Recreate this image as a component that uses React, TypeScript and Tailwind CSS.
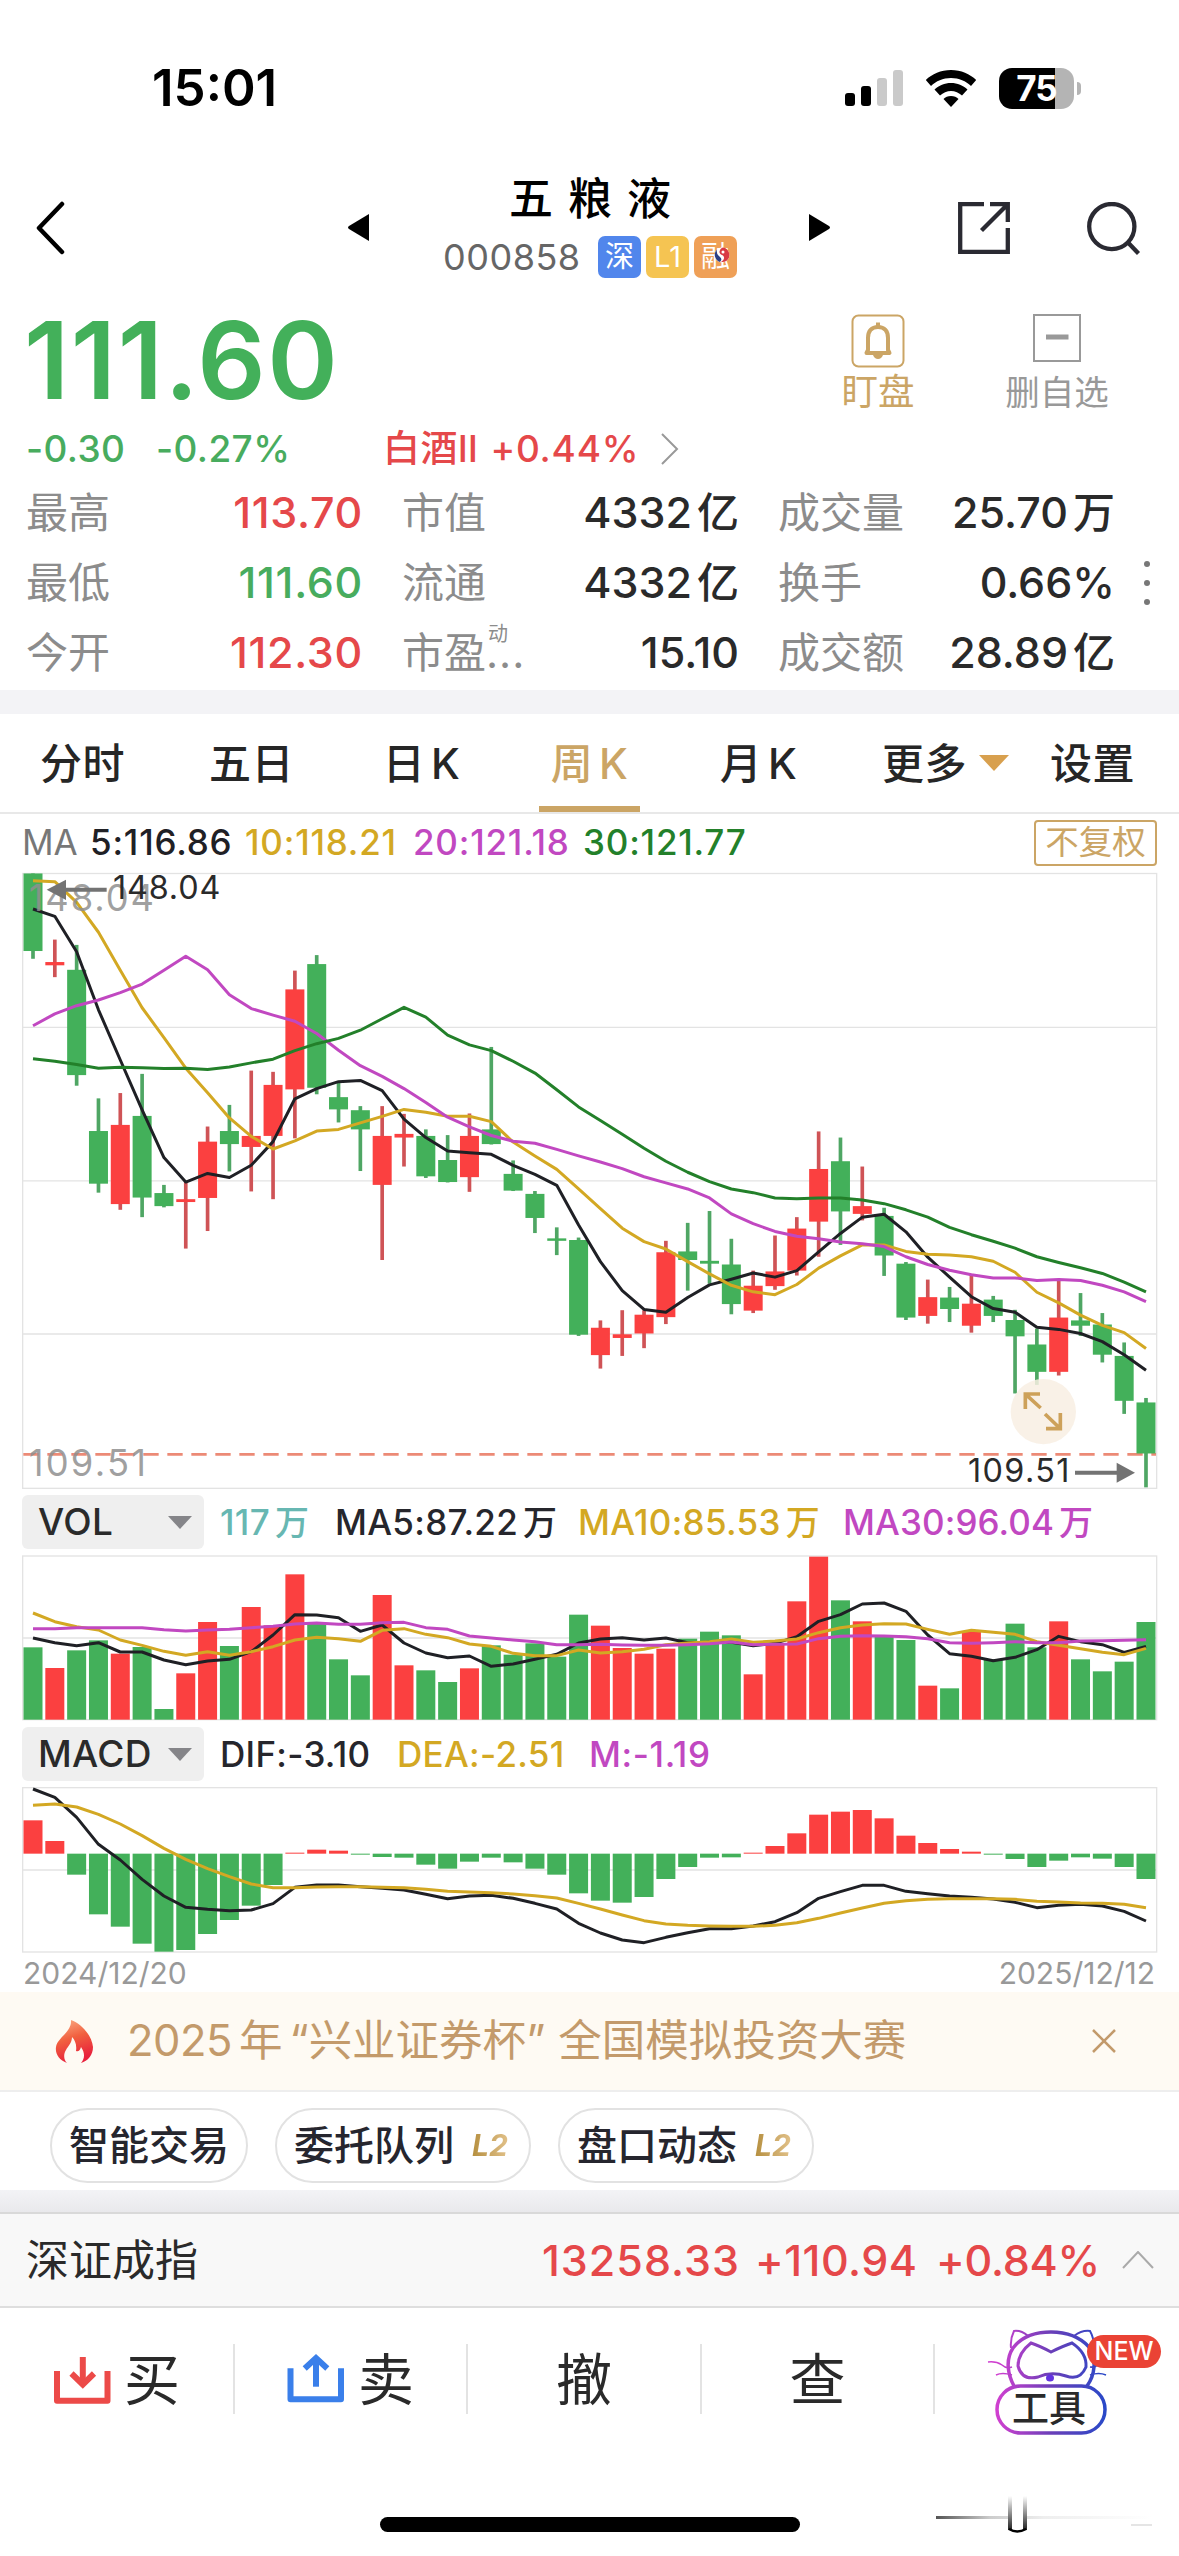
import React, { useId } from "react";
import clsx from "clsx";

type Candle = [hi: number, top: number, bottom: number, lo: number];

const CANDLES: Candle[] = [
  [33, 33, 223, 242], [195, 250, 258, 287], [208, 269, 527, 553], [584, 664, 793, 815],
  [571, 649, 843, 857], [524, 627, 827, 875], [796, 816, 848, 851], [787, 831, 838, 952],
  [653, 690, 828, 909], [600, 664, 696, 763], [516, 676, 703, 812], [519, 551, 676, 831],
  [271, 317, 562, 682], [233, 255, 558, 574], [545, 581, 611, 643], [603, 613, 660, 762],
  [603, 676, 796, 980], [622, 671, 680, 751], [660, 676, 775, 779], [674, 735, 789, 790],
  [621, 676, 777, 813], [458, 660, 696, 697], [736, 769, 810, 811], [811, 818, 877, 914],
  [900, 927, 933, 968], [925, 931, 1163, 1166], [1128, 1146, 1213, 1246], [1103, 1162, 1171, 1215],
  [1103, 1114, 1160, 1196], [933, 961, 1120, 1137], [889, 959, 980, 1055], [860, 982, 989, 1038],
  [928, 991, 1088, 1113], [1006, 1043, 1104, 1110], [920, 1008, 1044, 1053], [875, 903, 1006, 1018],
  [665, 757, 886, 972], [680, 738, 861, 943], [751, 848, 867, 883], [852, 872, 969, 1019],
  [985, 989, 1121, 1127], [1028, 1071, 1117, 1136], [1046, 1072, 1100, 1132], [1014, 1087, 1141, 1158],
  [1068, 1077, 1117, 1132], [1102, 1127, 1167, 1307], [1148, 1187, 1254, 1286], [1030, 1121, 1254, 1263],
  [1061, 1128, 1141, 1166], [1110, 1138, 1212, 1231], [1182, 1215, 1325, 1357], [1318, 1329, 1454, 1537],
];

// indexes of the weeks that closed up
const UP = new Set([1, 4, 7, 8, 10, 11, 12, 16, 17, 20, 26, 27, 28, 29, 33, 34, 35, 36, 38, 41, 43, 47]);

const MA5 = [120, 138, 225, 367, 490, 612, 729, 789, 768, 778, 748, 690, 585, 560, 543, 540, 565, 635, 680, 713, 717, 721, 748, 770, 797, 894, 984, 1055, 1101, 1108, 1072, 1041, 1027, 1012, 1022, 1006, 960, 915, 875, 868, 911, 973, 1022, 1070, 1099, 1108, 1145, 1150, 1160, 1180, 1212, 1250];
const MA10 = [51, 53, 104, 177, 270, 362, 435, 510, 570, 632, 677, 708, 688, 664, 660, 644, 628, 611, 618, 628, 628, 641, 691, 725, 758, 806, 854, 902, 935, 953, 984, 1014, 1042, 1058, 1065, 1040, 1000, 970, 943, 943, 959, 966, 968, 972, 983, 1010, 1059, 1085, 1115, 1140, 1158, 1197];
const MA20 = [406, 377, 357, 343, 325, 304, 270, 236, 269, 330, 364, 380, 395, 425, 466, 504, 530, 560, 594, 630, 654, 675, 689, 694, 709, 725, 740, 756, 776, 791, 806, 828, 867, 891, 910, 922, 928, 936, 940, 947, 972, 991, 1005, 1016, 1024, 1024, 1030, 1028, 1030, 1042, 1058, 1082];
const MA30 = [487, 493, 501, 510, 508, 509, 511, 510, 513, 507, 497, 488, 467, 450, 437, 417, 389, 361, 385, 429, 453, 467, 493, 522, 563, 605, 638, 672, 706, 738, 765, 788, 806, 815, 828, 830, 828, 828, 833, 842, 857, 875, 900, 918, 934, 951, 972, 986, 999, 1013, 1034, 1058];

const VOL = [472, 534, 481, 451, 491, 471, 657, 550, 396, 468, 351, 406, 253, 401, 508, 556, 315, 526, 541, 576, 535, 466, 494, 460, 500, 374, 407, 474, 491, 476, 446, 425, 436, 553, 465, 334, 200, 331, 394, 436, 450, 587, 595, 424, 508, 401, 472, 394, 508, 544, 515, 396];
const VOL_MA5 = [444, 458, 467, 458, 486, 486, 510, 524, 513, 508, 485, 435, 374, 375, 383, 424, 405, 459, 489, 503, 498, 529, 522, 508, 493, 459, 447, 443, 450, 444, 458, 457, 457, 467, 460, 440, 394, 374, 342, 339, 364, 435, 491, 499, 512, 502, 479, 439, 455, 464, 487, 469];
const VOL_MA10 = [369, 395, 410, 420, 450, 466, 484, 496, 485, 496, 485, 470, 450, 442, 446, 454, 421, 416, 433, 443, 462, 469, 490, 497, 497, 480, 489, 485, 478, 464, 459, 455, 447, 457, 453, 447, 428, 413, 405, 401, 402, 418, 433, 421, 427, 433, 455, 466, 476, 487, 494, 475];
const VOL_MA30 = [416, 416, 413, 413, 413, 413, 419, 423, 420, 418, 413, 409, 402, 399, 403, 403, 398, 397, 413, 418, 438, 444, 450, 455, 464, 464, 463, 465, 466, 466, 464, 461, 456, 464, 463, 462, 446, 439, 437, 438, 440, 446, 458, 460, 458, 455, 458, 458, 453, 452, 451, 449];

const MACD = [991, 1053, 1154, 1273, 1310, 1361, 1385, 1380, 1332, 1290, 1247, 1185, 1088, 1079, 1082, 1094, 1101, 1103, 1124, 1136, 1115, 1103, 1117, 1136, 1154, 1210, 1232, 1238, 1221, 1167, 1131, 1103, 1102, 1088, 1068, 1030, 974, 965, 960, 985, 1037, 1059, 1077, 1085, 1094, 1107, 1131, 1112, 1102, 1106, 1131, 1167];
const DIF = [897, 922, 982, 1063, 1110, 1168, 1218, 1252, 1258, 1262, 1260, 1241, 1192, 1185, 1185, 1190, 1195, 1200, 1213, 1226, 1218, 1216, 1225, 1240, 1257, 1300, 1329, 1350, 1358, 1342, 1328, 1316, 1316, 1308, 1295, 1268, 1225, 1205, 1186, 1186, 1204, 1211, 1218, 1222, 1227, 1237, 1253, 1246, 1243, 1248, 1264, 1293];
const DEA = [946, 942, 951, 973, 1002, 1037, 1075, 1108, 1136, 1160, 1182, 1193, 1193, 1191, 1190, 1190, 1192, 1193, 1198, 1204, 1206, 1208, 1212, 1217, 1224, 1240, 1257, 1275, 1292, 1302, 1306, 1308, 1309, 1309, 1306, 1298, 1285, 1269, 1254, 1240, 1232, 1228, 1226, 1226, 1226, 1228, 1234, 1236, 1239, 1240, 1243, 1253];

const RED = "#fb4040";
const GREEN = "#43b05a";
const GRID = "#e3e3e3";

// chart units are a third of a pixel
const xAt = (i: number) => 99 + i * 65.47;

// the price series is stored on a flatter scale than the chart is drawn
const priceY = (y: number) => y * 1.2245 - 27;

const Line = ({ data, color }: { data: number[]; color: string }) => (
  <polyline
    points={data.map((y, i) => `${xAt(i)},${y}`).join(" ")}
    fill="none"
    stroke={color}
    strokeWidth={9}
    strokeLinejoin="round"
  />
);

const Frame = ({ top, bottom, lines }: { top: number; bottom: number; lines: number[] }) => (
  <g stroke={GRID} strokeWidth={4} fill="none">
    <rect x={68} y={top} width={3402} height={bottom - top} />
    {lines.map((y) => (
      <path key={y} d={`M68 ${y}H3470`} />
    ))}
  </g>
);

const PriceChart = () => (
  <svg className="block h-[622px] w-full" viewBox="0 0 3537 1866">
    <Frame top={13.5} bottom={1858} lines={[475, 935.5, 1395]} />
    <path d="M70 1756H3468" stroke="#ec8a76" strokeWidth={8} strokeDasharray="46 26" />
    {CANDLES.map(([hi, top, bottom, lo], i) => (
      <g key={i}>
        <rect
          x={xAt(i) - 5.5}
          y={priceY(hi)}
          width={11}
          height={priceY(lo) - priceY(hi)}
          fill={UP.has(i) ? "#cf5356" : "#4fa664"}
        />
        <rect
          x={xAt(i) - 28.5}
          y={priceY(top)}
          width={57}
          height={priceY(bottom) - priceY(top)}
          fill={UP.has(i) ? RED : GREEN}
        />
      </g>
    ))}
    <Line data={MA5.map(priceY)} color="#1f2025" />
    <Line data={MA10.map(priceY)} color="#d3a823" />
    <Line data={MA20.map(priceY)} color="#c148c1" />
    <Line data={MA30.map(priceY)} color="#23802a" />
    <g className="font-[Inter,sans-serif]" fontSize={109}>
      <text x={86} y={125} fill="#8f8f8f" fillOpacity={0.85} textLength={376}>148.04</text>
      <text x={86} y={1820} fill="#8f8f8f" fillOpacity={0.85} textLength={352}>109.51</text>
      <text x={339} y={91} fill="#2a2a2a" fontSize={97} textLength={322}>148.04</text>
      <text x={2904} y={1840} fill="#2a2a2a" fontSize={97} textLength={304}>109.51</text>
    </g>
    <g fill="#737373">
      <path d="M140 62L198 32V56H320V68H198V93Z" />
      <path d="M3405 1811L3350 1781V1805H3225V1817H3350V1841Z" />
    </g>
    <circle cx={3130} cy={1628} r={98} fill="#f8efe3" fillOpacity={0.85} />
    <g fill="none" stroke="#cda15a" strokeWidth={11}>
      <path d="M3120 1575H3076V1620M3078 1577L3122 1617" />
      <path d="M3138 1679H3181V1632M3179 1677L3135 1635" />
    </g>
  </svg>
);

const VolumeChart = () => (
  <svg className="block h-[168px] w-full" viewBox="0 192 3537 504">
    <Frame top={198} bottom={689} lines={[444]} />
    {VOL.map((y, i) => (
      <rect key={i} x={xAt(i) - 28.5} y={y} width={57} height={689 - y} fill={UP.has(i) ? RED : GREEN} />
    ))}
    <Line data={VOL_MA5} color="#1f2025" />
    <Line data={VOL_MA10} color="#d3a823" />
    <Line data={VOL_MA30} color="#c148c1" />
  </svg>
);

const MacdChart = () => (
  <svg className="block h-[168px] w-full" viewBox="0 888 3537 504">
    <Frame top={893} bottom={1386} lines={[1140]} />
    {MACD.map((y, i) => (
      <rect
        key={i}
        x={xAt(i) - 28.5}
        y={Math.min(y, 1091)}
        width={57}
        height={Math.abs(y - 1091)}
        fill={y < 1091 ? RED : GREEN}
      />
    ))}
    <Line data={DIF} color="#1f2025" />
    <Line data={DEA} color="#d3a823" />
  </svg>
);

const StatusBar = () => (
  <div className="flex h-[165px] items-start justify-between pt-[65px] pr-[98px] pl-[152px]">
    <span className="text-[51px] leading-[46px] font-semibold text-black">15:01</span>
    <div className="flex h-[46px] items-center">
      <svg className="h-[38px] w-[58px]" viewBox="0 0 58 38">
        <rect x="0" y="24" width="10" height="13" rx="3" />
        <rect x="16" y="17" width="10" height="20" rx="3" />
        <rect x="32" y="9" width="10" height="28" rx="3" fill="#cacaca" />
        <rect x="48" y="1" width="10" height="36" rx="3" fill="#cacaca" />
      </svg>
      <svg className="ml-[22px] h-[38px] w-[52px]" viewBox="0 0 52 38">
        <path d="M26 1C16 1 7 5 .8 11L6 17C11 12 18 9 26 9S41 12 46 17L51.200 11C45 5 36 1 26 1Z" />
        <path d="M26 14C19.500 14 14 16.500 9.500 20.500L15 26.500C18 23.800 22 22 26 22S34 23.800 37 26.500L42.500 20.500C38 16.500 32.500 14 26 14Z" />
        <path d="M26 27C22.800 27 20.300 28.200 18.500 30L26 38L33.500 30C31.700 28.200 29.200 27 26 27Z" />
      </svg>
      <div className="ml-[22px] flex h-[41px] w-[75px] items-center justify-center rounded-[13px] bg-[linear-gradient(90deg,#000_75%,#b4b4b4_75%)] text-[35px] font-bold tracking-[-1px] text-white">
        75
      </div>
      <div className="ml-[3px] h-[13px] w-1 rounded-r-full bg-[#b4b4b4]" />
    </div>
  </div>
);

const Badge = ({ text, className }: { text: string; className: string }) => (
  <span className={clsx("flex h-[42px] w-[43px] items-center justify-center rounded-[7px] text-[29px] text-white", className)}>
    {text}
  </span>
);

const Header = () => (
  <header className="flex h-[135px] items-start pl-[36px]">
    <svg className="mt-[36px] h-[54px] w-[30px]" viewBox="0 0 30 54" fill="none" stroke="#000" strokeWidth="4.500" strokeLinecap="round" strokeLinejoin="round">
      <path d="M26 3L3 27L26 51" />
    </svg>
    <svg className="mt-[49px] ml-[282px] h-[27px] w-[21px]" viewBox="0 0 21 27">
      <path d="M21 0V27L1 15Q-1 13.500 1 12Z" />
    </svg>
    <div className="ml-[74px] w-[294px]">
      <div className="mt-[9px] pl-[66px] text-[44px] leading-[50px] font-medium tracking-[15px] whitespace-nowrap text-black">
        五粮液
      </div>
      <div className="mt-[12px] flex items-center">
        <span className="w-[156px] text-[36px] leading-[42px] tracking-[0.500px] text-[#666]">000858</span>
        <div className="relative flex gap-[5px]">
          <Badge text="深" className="bg-[#5186ec]" />
          <Badge text="L1" className="bg-[#f5c452]" />
          <Badge text="融" className="bg-[#efa057]" />
          <svg className="absolute top-[11px] right-[7px] h-4 w-4" viewBox="0 0 16 16">
            <circle cx="8" cy="8" r="7.500" fill="#fff" />
            <path d="M9 .6A7.500 7.500 0 0 1 13 13.500Q10 15.500 7 15Q12 12 9 8.500Q5 7 5.500 4.500Q6.500 1 9 .6Z" fill="#d93a44" />
            <path d="M3 2.500Q2 7 5.500 9.500Q9 12 6 15A7.500 7.500 0 0 1 3 2.500Z" fill="#2c3f86" />
            <circle cx="9" cy="5" r="1.500" fill="#fff" />
          </svg>
        </div>
      </div>
    </div>
    <svg className="mt-[49px] ml-[72px] h-[27px] w-[21px]" viewBox="0 0 21 27">
      <path d="M0 0V27L20 15Q22 13.500 20 12Z" />
    </svg>
    <svg className="mt-[37px] ml-[128px] h-[52px] w-[52px]" viewBox="0 0 52 52" fill="none" stroke="#2a2a32" strokeWidth="4.300">
      <path d="M26 2.200H2.200V49.800H49.800V26" />
      <path d="M32 2.200H49.800V20M49 3L23.500 28.500" />
    </svg>
    <svg className="mt-[37px] ml-[77px] h-[54px] w-[54px]" viewBox="0 0 54 54" fill="none" stroke="#2a2a32" strokeWidth="4.300">
      <circle cx="24.800" cy="24.600" r="22.600" />
      <path d="M40.500 40L51.500 51.500" />
    </svg>
  </header>
);

const PriceSummary = () => (
  <section className="flex h-[126px] items-start pl-[24px]">
    <div className="w-[817px] text-[107px] leading-[120px] font-semibold tracking-[1.600px] text-[#43b05a]">
      111.60
    </div>
    <div className="flex w-[74px] flex-col items-center pt-[14px] text-[#cba565]">
      <svg className="h-[54px] w-[54px]" viewBox="0 0 54 54" fill="none" stroke="currentColor">
        <rect x="1.500" y="1.500" width="51" height="51" rx="6" strokeWidth="2" />
        <g strokeWidth="4">
          <path d="M17 36V24C17 17 20.500 13 27 13S37 17 37 24V36L38.500 39H15.500Z" strokeLinejoin="round" />
          <path d="M27 8.500V13" />
        </g>
        <path d="M22 41H32Q30.500 45 27 45T22 41Z" fill="currentColor" stroke="none" />
      </svg>
      <span className="text-[36.500px] leading-[48px] whitespace-nowrap">盯盘</span>
    </div>
    <div className="ml-[92px] flex w-[100px] flex-col items-center pt-[14px] text-[#999]">
      <svg className="h-[48px] w-[48px]" viewBox="0 0 48 48" fill="none" stroke="currentColor">
        <rect x="1" y="1" width="46" height="46" strokeWidth="2" />
        <path d="M13 23H35.500" strokeWidth="5" />
      </svg>
      <span className="mt-[7px] text-[34.500px] leading-[48px] whitespace-nowrap">删自选</span>
    </div>
  </section>
);

const ChangeRow = () => (
  <div className="flex h-[46px] items-center pl-[26px] text-[37px] font-[450] tracking-[0.400px] text-[#48ac5e]">
    <span className="w-[130px]">-0.30</span>
    <span className="w-[227px]">-0.27%</span>
    <span className="flex w-[278px] items-center gap-[12px] whitespace-nowrap text-[#e5484a]">
      <span>白酒Ⅱ</span>
      <span className="tracking-[0.800px]">+0.44%</span>
    </span>
    <svg className="h-[32px] w-[18px]" viewBox="0 0 18 32" fill="none" stroke="#999" strokeWidth="2">
      <path d="M1 1L16 16L1 31" />
    </svg>
  </div>
);

type Quote = { label: string; sup?: string; value: string; unit?: string; color?: string };

const QUOTES: Quote[][] = [
  [
    { label: "最高", value: "113.70", color: "text-[#e5484a] tracking-[0.700px]" },
    { label: "市值", value: "4332", unit: "亿" },
    { label: "成交量", value: "25.70", unit: "万" },
  ],
  [
    { label: "最低", value: "111.60", color: "text-[#48ac5e] tracking-[0.700px]" },
    { label: "流通", value: "4332", unit: "亿" },
    { label: "换手", value: "0.66%" },
  ],
  [
    { label: "今开", value: "112.30", color: "text-[#e5484a] tracking-[0.700px]" },
    { label: "市盈", sup: "动", value: "15.10" },
    { label: "成交额", value: "28.89", unit: "亿" },
  ],
];

const QuoteTable = () => (
  <section className="flex h-[218px] pl-[26px]">
    <div className="grid h-[210px] w-[1089px] grid-cols-[337px_337px_337px] grid-rows-[70px_70px_70px] gap-x-[39px]">
      {QUOTES.flat().map((q) => (
        <div key={q.label} className="flex items-center justify-between whitespace-nowrap">
          <span className="flex text-[42px] text-[#8c8c8c]">
            {q.label}
            {q.sup && (
              <span className="relative tracking-[1px]">
                ...
                <span className="absolute -top-[2px] left-[2px] text-[20px]">{q.sup}</span>
              </span>
            )}
          </span>
          <span className={clsx("text-[43px] font-medium", q.color ?? "text-[#2a2a2a]")}>
            {q.value}
            {q.unit && <span className="ml-[5px] text-[42px]">{q.unit}</span>}
          </span>
        </div>
      ))}
    </div>
    <div className="mt-[84px] ml-[29px] flex flex-col gap-[13px]">
      <i className="h-[6px] w-[6px] rounded-full bg-[#777]" />
      <i className="h-[6px] w-[6px] rounded-full bg-[#777]" />
      <i className="h-[6px] w-[6px] rounded-full bg-[#777]" />
    </div>
  </section>
);

const Tab = ({ label, width, active }: { label: string; width: string; active?: boolean }) => (
  <div
    className={clsx(
      "flex h-full items-center justify-center border-y-[6px] border-t-transparent",
      width,
      active ? "border-b-[#cba565] text-[#cba565]" : "border-b-transparent"
    )}
  >
    {label}
  </div>
);

const Tabs = () => (
  <nav className="flex h-[100px] border-b-2 border-[#e8e8e8] pl-[32px] text-[42px] font-medium tracking-[0.500px] [word-spacing:-6px] whitespace-nowrap text-[#262626]">
    <Tab label="分时" width="w-[101px]" />
    <Tab label="五日" width="ml-[68px] w-[101px]" />
    <Tab label="日 K" width="ml-[69px] w-[101px]" />
    <Tab label="周 K" width="ml-[67px] w-[101px]" active />
    <Tab label="月 K" width="ml-[68px] w-[101px]" />
    <Tab label="更多" width="ml-[65px] w-[101px]" />
    <svg className="mt-[41px] ml-[4px] h-[16px] w-[30px]" viewBox="0 0 30 16">
      <path d="M0 0H30L15 16Z" fill="#d8a04e" />
    </svg>
    <Tab label="设置" width="ml-[33px] w-[101px]" />
  </nav>
);

const Indicators = ({ name, children }: { name: string; children: React.ReactNode }) => (
  <div className="flex h-[62px] items-center pl-[22px] text-[35px] font-[450] tracking-[0.300px] whitespace-nowrap text-[#26262c]">
    <div className="flex h-[54px] w-[182px] items-center justify-between rounded-[6px] bg-[#efefef] pr-[12px] pl-[16px] text-[37px] text-[#2a2a2a]">
      {name}
      <svg className="h-[13px] w-[24px]" viewBox="0 0 24 13">
        <path d="M0 0H24L12 13Z" fill="#858589" />
      </svg>
    </div>
    {children}
  </div>
);

const Unit = () => <span className="ml-[5px] text-[34px]">万</span>;

const Flame = () => {
  const id = useId();
  return (
    <svg className="h-[43px] w-[38px]" viewBox="0 0 38 43">
      <linearGradient id={id} x1="0" y1="0" x2=".3" y2="1">
        <stop offset=".1" stopColor="#f9a27c" />
        <stop offset=".5" stopColor="#f1603f" />
        <stop offset="1" stopColor="#e8213c" />
      </linearGradient>
      <path
        d="M16 0C27 4 37 16 38 27C38 35 33 41 26 43C30 38 30 33 26 27C25 31 23 32 21 31C22 25 20 20 17 17C17 23 13 26 11 30C8 35 9 40 12 43C4 40 0 34 1 27C2 18 17 12 16 0Z"
        fill={`url(#${id})`}
      />
    </svg>
  );
};

const Banner = () => (
  <div className="flex h-[100px] items-center border-b-2 border-[#eeeeee] bg-[#fefaf3] pl-[55px] text-[43.500px] whitespace-nowrap text-[#c39a6b]">
    <Flame />
    <div className="ml-[34px] flex w-[965px] items-center">
      <span className="tracking-[-0.500px]">2025</span>
      <span className="ml-[7px]">年</span>
      <span className="ml-[7px]">“</span>
      <span>兴业证券杯</span>
      <span>”</span>
      <span className="ml-[13px]">全国模拟投资大赛</span>
    </div>
    <svg className="h-[24px] w-[24px]" viewBox="0 0 24 24" stroke="#c39a6b" strokeWidth="2.500">
      <path d="M1 1L23 23M23 1L1 23" />
    </svg>
  </div>
);

const Pill = ({ label, level2 }: { label: string; level2?: boolean }) => (
  <button className="flex h-[75px] items-center rounded-full border-2 border-[#e2e2e2] px-[17px] text-[40px] font-medium whitespace-nowrap text-[#26262e]">
    {label}
    {level2 && (
      <span className="ml-[14px] w-[44px] bg-linear-to-r from-[#b18a35] to-[#e6c690] bg-clip-text text-[30px] font-bold text-transparent italic">
        L2
      </span>
    )}
  </button>
);

const IndexBar = () => (
  <div className="flex h-[96px] items-center border-y-2 border-t-[#d9d9d9] border-b-[#dedede] bg-[#f8f8f8] pl-[26px] text-[43px] font-[450] whitespace-nowrap text-[#e5484a]">
    <span className="w-[516px] text-[43px] font-normal text-[#2a2a2a]">深证成指</span>
    <span className="w-[213px] tracking-[1px]">13258.33</span>
    <span className="w-[181px] tracking-[0.500px]">+110.94</span>
    <span className="w-[186px] tracking-[-0.200px]">+0.84%</span>
    <svg className="h-[18px] w-[32px]" viewBox="0 0 32 18" fill="none" stroke="#aaa" strokeWidth="2">
      <path d="M1 17L16 1L31 17" />
    </svg>
  </div>
);

const CatTools = () => {
  const id = useId();
  return (
    <div className="relative h-[120px] w-[190px]">
      <svg className="h-[120px] w-[190px]" viewBox="0 0 190 120" fill="none" stroke={`url(#${id})`}>
        <defs>
          <linearGradient id={id} gradientUnits="userSpaceOnUse" x1="17" y1="0" x2="125" y2="0">
            <stop stopColor="#d040d0" />
            <stop offset=".5" stopColor="#6a3fb8" />
            <stop offset="1" stopColor="#2a49c8" />
          </linearGradient>
        </defs>
        <path d="M34 57C28 46 25 31 33 19C42 7 56 3 71 3S99 7 109 18C117 30 115 46 107 57" strokeWidth="3.500" />
        <path d="M31 19Q30 10 34 2Q41 1 48 7M94 7Q102 1 110 2Q114 9 114 18" strokeWidth="2" />
        <path d="M51 14Q60 17 71 23Q83 17 92 14Q107 24 106 38Q100 52 86 47Q71 42 58 48Q42 52 38 37Q38 24 51 14Z" strokeWidth="3" />
        <path d="M8 33Q16 32 22 36Q26 40 32 38M16 46Q22 43 32 46M110 38Q117 39 122 32M110 46Q119 43 126 46" strokeWidth="1.500" />
        <ellipse cx="70" cy="49" rx="4" ry="3.500" fill="#6434e0" stroke="none" />
        <rect x="17" y="57" width="108" height="47" rx="23.500" fill="#fff" strokeWidth="3.500" />
      </svg>
      <span className="absolute top-[58px] left-[32px] text-[37px] leading-[44px] font-medium text-[#2a2a2a]">工具</span>
      <span className="absolute top-[6px] left-[107px] flex h-[33px] w-[74px] items-center justify-center rounded-full bg-[#ea4335] text-[25px] leading-none font-medium text-white">
        NEW
      </span>
    </div>
  );
};

const TradeBar = () => (
  <div className="flex h-[142px] items-start pt-[36px] text-[56px] leading-[70px] font-normal text-[#2a2a2a]">
    <div className="flex h-[70px] w-[235px] items-center border-r-2 border-[#e3e3e3] pl-[53px]">
      <svg className="h-[52px] w-[58px]" viewBox="0 0 58 52" fill="none" stroke="#ec4a48" strokeWidth="6">
        <path d="M4 18V47.700H54.500V18" strokeLinejoin="round" />
        <path d="M29.800 4V32" />
        <path d="M18.500 20.500L29.800 31.500L41 20.500" />
      </svg>
      <span className="mt-[2px] ml-[13px]">买</span>
    </div>
    <div className="flex h-[70px] w-[233px] items-center border-r-2 border-[#e3e3e3] pl-[52px]">
      <svg className="h-[52px] w-[58px]" viewBox="0 0 58 52" fill="none" stroke="#3a7fea" strokeWidth="6">
        <path d="M3.500 15.300V46.300H54V15.300" strokeLinejoin="round" />
        <path d="M29 33.700V5" />
        <path d="M17.700 15.500L29 5L40.300 15.500" />
      </svg>
      <span className="mt-[2px] ml-[13px]">卖</span>
    </div>
    <div className="flex h-[70px] w-[234px] items-center justify-center border-r-2 border-[#e3e3e3] pt-[2px]">撤</div>
    <div className="flex h-[70px] w-[233px] items-center justify-center border-r-2 border-[#e3e3e3] pt-[2px]">查</div>
    <div className="-mt-[15px] ml-[45px]">
      <CatTools />
    </div>
  </div>
);

// faint streaks next to the home indicator
const Streaks = () => (
  <svg className="h-[38px] w-[216px]" viewBox="0 0 216 38">
    <defs>
      <linearGradient id="fade-x">
        <stop stopColor="#555" />
        <stop offset=".25" stopColor="#ccc" />
        <stop offset=".5" stopColor="#eee" />
        <stop offset="1" stopColor="#fff" />
      </linearGradient>
      <linearGradient id="fade-y" x1="0" y1="0" x2="0" y2="1">
        <stop stopColor="#fff" />
        <stop offset="1" stopColor="#222" />
      </linearGradient>
    </defs>
    <rect y="20" width="216" height="3" fill="url(#fade-x)" />
    <rect x="72" y="2" width="19" height="32" fill="#fff" />
    <rect x="72" y="0" width="4" height="34" fill="url(#fade-y)" />
    <rect x="87" y="0" width="4" height="34" fill="url(#fade-y)" />
    <path d="M73 33Q81 38 90 33" fill="none" stroke="#000" strokeWidth="2.500" />
    <path d="M195 29H216" stroke="#ddd" strokeWidth="1.500" />
  </svg>
);

const App = () => {
  return (
    <main className="h-[2556px] w-[1179px] overflow-hidden bg-white font-[Inter,'Noto_Sans_CJK_SC',sans-serif]">
      <StatusBar />
      <Header />
      <PriceSummary />
      <div className="pb-[2px]">
        <ChangeRow />
      </div>
      <div className="pt-[3px]">
        <QuoteTable />
      </div>
      <div className="-mt-[5px] h-[24px] bg-[#f3f3f6]" />
      <Tabs />
      <div className="flex h-[55px] items-center pt-[2px] pl-[22px] text-[35px] font-[450] tracking-[0.800px] whitespace-nowrap">
        <span className="w-[68px] font-normal tracking-normal text-[#777]">MA</span>
        <span className="w-[155px] text-[#1f2025]">5:116.86</span>
        <span className="w-[168px] text-[#d3a823]">10:118.21</span>
        <span className="w-[170px] text-[#c148c1]">20:121.18</span>
        <span className="w-[451px] text-[#23802a]">30:121.77</span>
        <span className="flex h-[46px] w-[123px] items-center justify-center rounded-[4px] border-2 border-[#cba565] text-[33.500px] font-normal tracking-normal text-[#cba565]">
          不复权
        </span>
      </div>
      <PriceChart />
      <div className="pb-[1px]">
        <Indicators name="VOL">
          <span className="ml-[16px] w-[115px] text-[#67b7b2]">117<Unit /></span>
          <span className="w-[243px]">MA5:87.22<Unit /></span>
          <span className="w-[265px] text-[#d3a823]">MA10:85.53<Unit /></span>
          <span className="tracking-[0.100px] text-[#c148c1]">MA30:96.04<Unit /></span>
        </Indicators>
      </div>
      <VolumeChart />
      <div className="py-[1px]">
        <Indicators name="MACD">
          <span className="ml-[16px] w-[177px]">DIF:-3.10</span>
          <span className="w-[192px] text-[#d3a823]">DEA:-2.51</span>
          <span className="tracking-[0.600px] text-[#c148c1]">M:-1.19</span>
        </Indicators>
      </div>
      <MacdChart />
      <div className="flex h-[38px] items-center justify-between pr-[24px] pl-[23px] text-[30px] leading-[38px] text-[#999]">
        <span>2024/12/20</span>
        <span>2025/12/12</span>
      </div>
      <Banner />
      <div className="flex h-[98px] gap-[27px] pt-[16px] pl-[50px]">
        <Pill label="智能交易" />
        <Pill label="委托队列" level2 />
        <Pill label="盘口动态" level2 />
      </div>
      <div className="h-[22px] bg-linear-to-b from-[#f3f3f6] to-[#e9e9ec]" />
      <IndexBar />
      <TradeBar />
      <div className="flex h-[106px] items-start">
        <div className="mt-[67px] ml-[380px] h-[15px] w-[420px] rounded-full bg-black" />
        <div className="mt-[46px] ml-[136px]">
          <Streaks />
        </div>
      </div>
    </main>
  );
};

export default App;
